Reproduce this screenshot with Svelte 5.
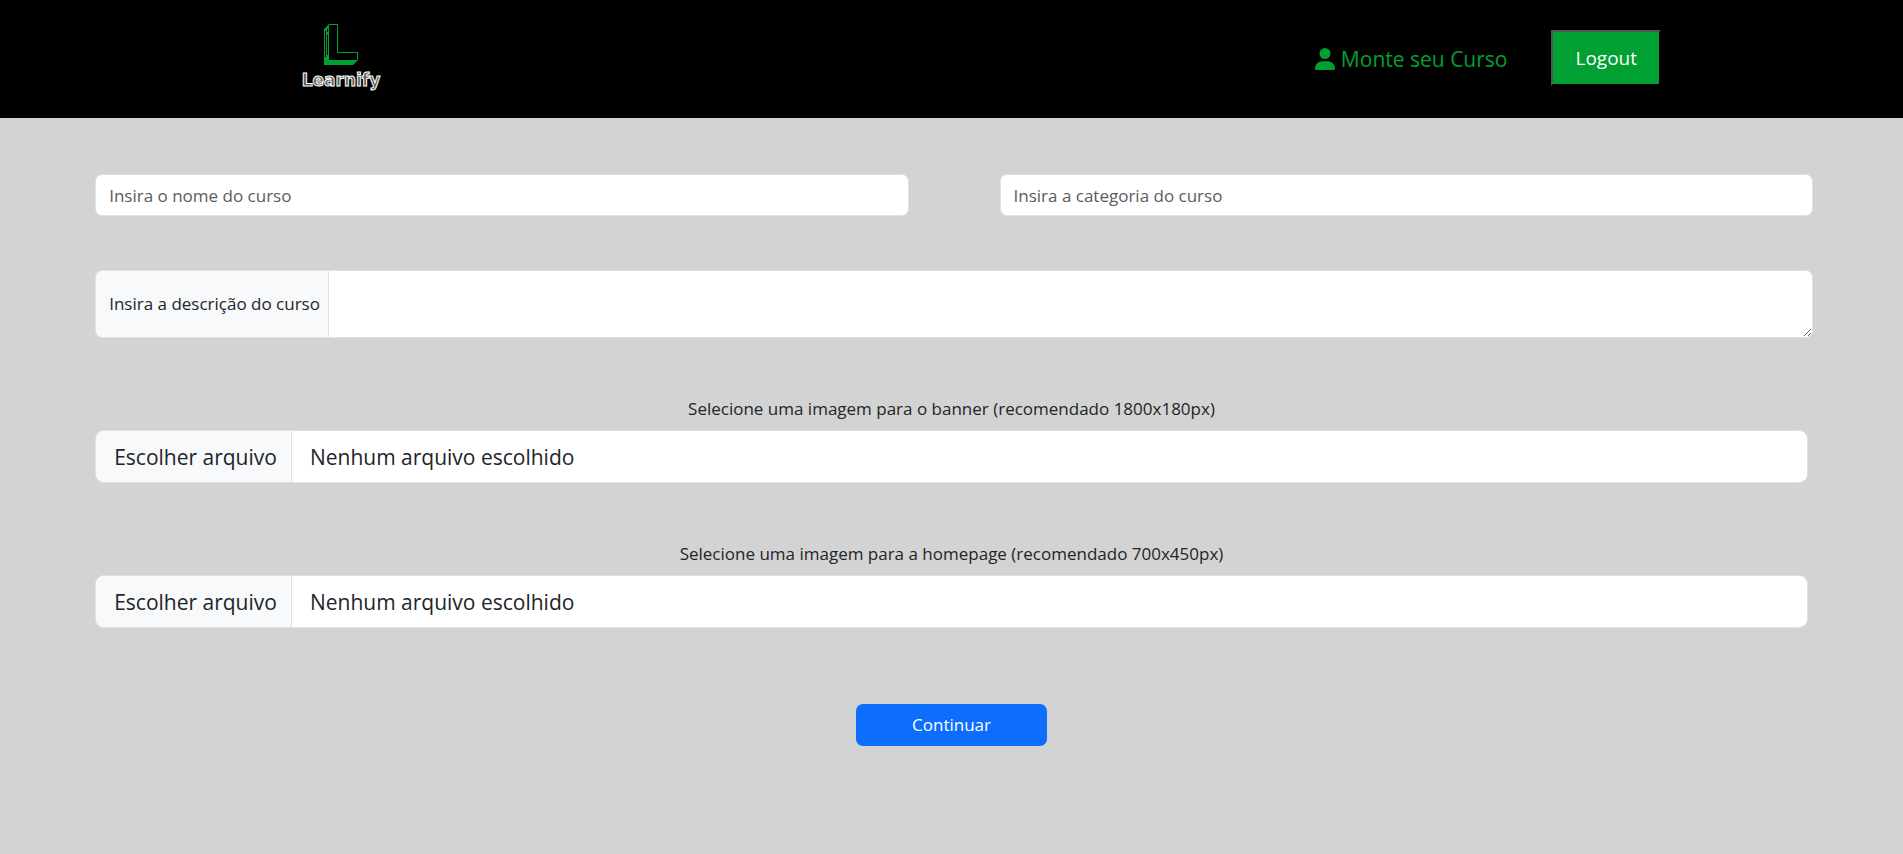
<script>
  let name = $state('');
  let category = $state('');
  let description = $state('');
  let uploads = $state([
    { id: 'banner', label: 'Selecione uma imagem para o banner (recomendado 1800x180px)', file: '' },
    { id: 'homepage', label: 'Selecione uma imagem para a homepage (recomendado 700x450px)', file: '' }
  ]);

  function pick(event, upload) {
    upload.file = event.currentTarget.files[0]?.name ?? '';
  }
</script>

<header>
  <a class="brand" href="#home">
    <svg width="36" height="42" viewBox="0 0 36 42" aria-hidden="true">
      <path d="M1 6 6 1h9v28h20v8l-5 5H1z" fill="#00a032" />
      <path d="M6 2h8v28h20v7H6z" fill="#000" />
      <path d="M2.5 8v26M4.5 6v3M4.5 12v20" stroke="#000" fill="none" />
      <path d="M5.500 2.500l1-1h7l1 1v27h19l1 1v6l-1 1h-28z" stroke="#00a032" fill="none" />
    </svg>
    <span>Learnify</span>
  </a>
  <nav>
    <a class="build" href="#curso">
      <svg width="20" height="22" viewBox="0 0 20 22" fill="currentColor" aria-hidden="true">
        <circle cx="10" cy="5.500" r="5.500" />
        <path d="M0 20.500C0 16 3.500 13.200 7.500 13.200h5c4 0 7.500 2.800 7.500 7.300 0 .9-.6 1.500-1.500 1.500h-17C.6 22 0 21.400 0 20.500z" />
      </svg>
      Monte seu Curso
    </a>
    <button class="logout" type="button">Logout</button>
  </nav>
</header>

<main>
  <form onsubmit={(e) => e.preventDefault()}>
    <div class="pair">
      <input type="text" placeholder="Insira o nome do curso" aria-label="Nome do curso" bind:value={name} />
      <input type="text" placeholder="Insira a categoria do curso" aria-label="Categoria do curso" bind:value={category} />
    </div>

    <div class="group">
      <label for="description">Insira a descrição do curso</label>
      <textarea id="description" bind:value={description}></textarea>
    </div>

    {#each uploads as upload (upload.id)}
      <div class="upload">
        <label class="caption" for={upload.id}>{upload.label}</label>
        <label class="picker">
          <input id={upload.id} type="file" accept="image/*" onchange={(e) => pick(e, upload)} />
          <span class="choose">Escolher arquivo</span>
          <span class="chosen">{upload.file || 'Nenhum arquivo escolhido'}</span>
        </label>
      </div>
    {/each}

    <button class="submit" type="submit">Continuar</button>
  </form>
</main>

<style>
  :global(body) {
    margin: 0;
    background: #d3d3d3;
    color: #212529;
    font-family: 'Segoe UI', 'Open Sans', 'Noto Sans', sans-serif;
    font-size: 17px;
    line-height: 26px;
  }

  header,
  header *,
  main * {
    box-sizing: border-box;
  }

  header {
    display: flex;
    align-items: center;
    justify-content: space-between;
    height: 118px;
    padding: 0 242px 2px 300px;
    background: #000;
  }

  .brand {
    display: flex;
    flex-direction: column;
    align-items: center;
    min-width: 82px;
    padding-top: 2px;
    text-decoration: none;
  }

  .brand svg {
    display: block;
  }

  .brand span {
    color: #555;
    font-family: 'DejaVu Sans', sans-serif;
    font-size: 17px;
    font-weight: 700;
    line-height: 30px;
    -webkit-text-stroke: 1px #fff;
  }

  nav {
    display: flex;
    align-items: center;
    gap: 44px;
  }

  .build {
    display: flex;
    align-items: center;
    gap: 6px;
    padding-top: 2px;
    color: #00a032;
    font-size: 21px;
    line-height: 30px;
    text-decoration: none;
  }

  .logout {
    height: 56px;
    padding: 0 22px;
    border: 2px outset #000;
    background: #00a032;
    color: #fff;
    font: 500 19px 'Segoe UI', 'Open Sans', sans-serif;
  }

  form {
    display: flex;
    flex-direction: column;
    padding: 56px 5%;
  }

  .pair,
  .group {
    margin-right: -5px;
  }

  .pair {
    display: grid;
    grid-template-columns: 1fr 1fr;
    gap: 91px;
    margin-bottom: 54px;
  }

  input,
  textarea {
    border: 1px solid #dee2e6;
    background: #fff;
    color: #212529;
    font: inherit;
  }

  .pair input {
    min-width: 0;
    height: 42px;
    padding: 0 13px;
    border-radius: 7px;
  }

  input::placeholder {
    color: #595c5f;
    opacity: 1;
  }

  .group {
    display: flex;
    margin-bottom: 58px;
  }

  .group label {
    display: flex;
    align-items: center;
    padding: 0 8px 0 13px;
    border: 1px solid #dee2e6;
    border-right: 0;
    border-radius: 7px 0 0 7px;
    background: #f8f9fa;
  }

  textarea {
    flex: 1;
    min-width: 0;
    height: 68px;
    padding: 7px 13px;
    border-radius: 0 7px 7px 0;
    resize: vertical;
  }

  .upload {
    display: flex;
    flex-direction: column;
    gap: 8px;
    margin-bottom: 58px;
  }

  .caption {
    text-align: center;
  }

  .picker {
    display: flex;
    position: relative;
    height: 53px;
    overflow: hidden;
    border: 1px solid #dee2e6;
    border-radius: 9px;
    background: #fff;
    font-size: 21px;
    line-height: 52px;
  }

  .picker input {
    position: absolute;
    inset: 0;
    opacity: 0;
  }

  .choose {
    padding: 0 14px 0 18px;
    border-right: 1px solid #dee2e6;
    background: #f8f9fa;
  }

  .chosen {
    padding: 0 18px;
  }

  .submit {
    align-self: center;
    width: 191px;
    height: 42px;
    margin-top: 18px;
    border: 0;
    border-radius: 7px;
    background: #0d6efd;
    color: #fff;
    font: inherit;
  }
</style>
